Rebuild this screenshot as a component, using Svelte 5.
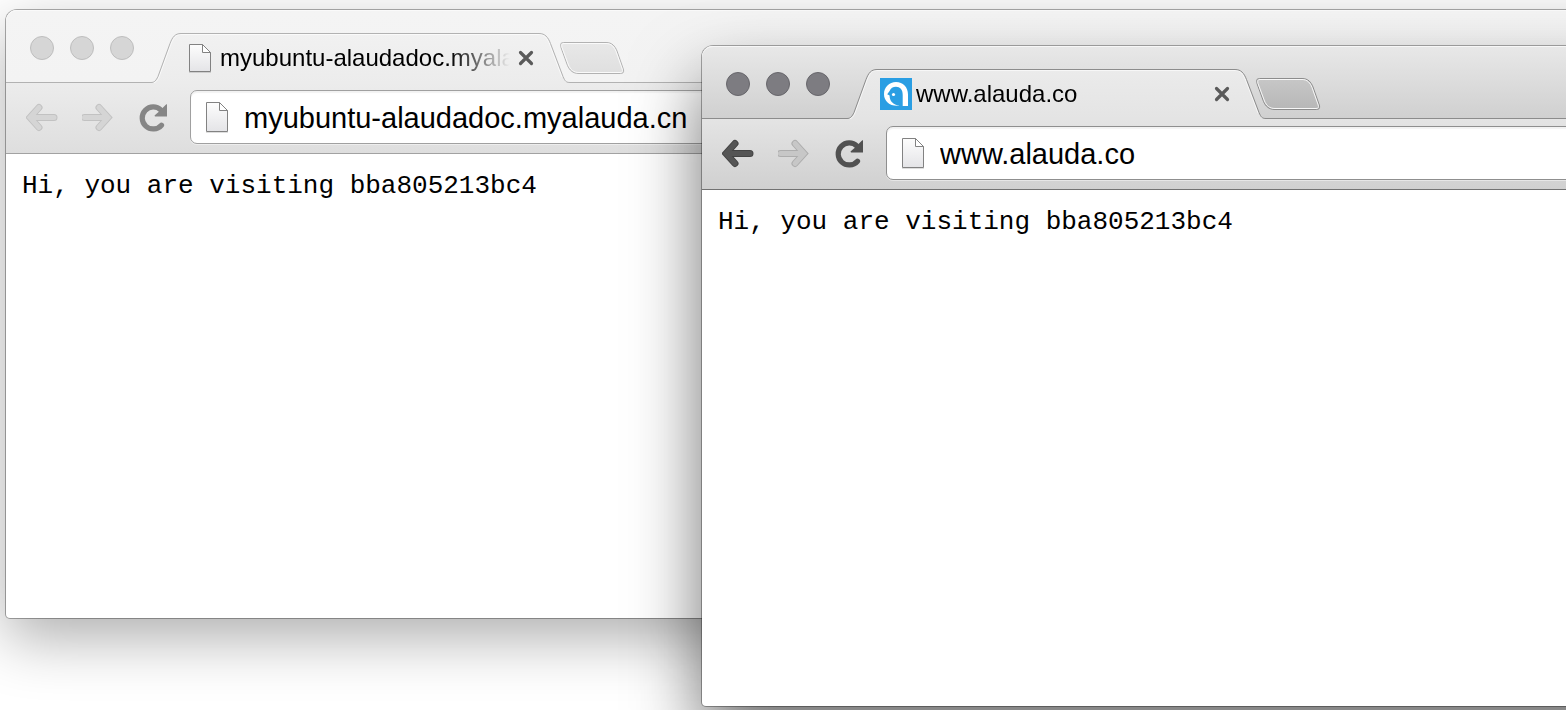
<script>
  const windows = [
    { id: 'back', title: 'myubuntu-alaudadoc.myalauda.cn', url: 'myubuntu-alaudadoc.myalauda.cn', active: false, logo: false },
    { id: 'front', title: 'www.alauda.co', url: 'www.alauda.co', active: true, logo: true }
  ];
  const message = 'Hi, you are visiting bba805213bc4';
</script>

{#snippet page(id, height)}
  <svg class="page" width="24" height={height + 2} viewBox="0 0 24 {height + 2}" aria-hidden="true">
    <defs>
      <linearGradient id="paper-{id}" x1="0" y1="0" x2="0" y2="1">
        <stop offset="0" stop-color="#fdfdfd" />
        <stop offset="1" stop-color="#e4e4e7" />
      </linearGradient>
    </defs>
    <path d="M1 {height + 1.5}H23" stroke="#000" stroke-opacity=".13" />
    <path d="M1.5 1.5H14.5L22.5 9.5V{height + 0.5}H1.5Z" fill="url(#paper-{id})" stroke="#828282" />
    <path d="M14.5 1.5V9.5H22.5Z" fill="#fff" stroke="#828282" />
  </svg>
{/snippet}

<main class="desktop">
  {#each windows as w (w.id)}
    <section class="window {w.id}" aria-label={w.title}>
      <header class="strip">
        <div class="lights">
          <button aria-label="Close window"></button>
          <button aria-label="Minimize window"></button>
          <button aria-label="Zoom window"></button>
        </div>
        <div class="tab">
          <svg class="shape" width="420" height="50" viewBox="0 0 420 50" aria-hidden="true">
            <defs>
              <linearGradient id="tab-{w.id}" x1="0" y1="0" x2="0" y2="1">
                <stop class="tab-top" offset="0" />
                <stop class="tab-bottom" offset="1" />
              </linearGradient>
            </defs>
            <path d="M0 50V49.500H1C4.500 49.500 6 47.500 8 43.500L20 10.500C22.500 4 25 .5 31 .5H389C395 .5 398 4 400.500 10.500L413 43.500C415 48 416 49.500 420 49.500V50Z" fill="url(#tab-{w.id})" />
            <path class="rim" d="M3 50C6 49.500 7.500 47.500 9 44L21 11C23.500 5 26 1.500 31 1.500H389C394.500 1.500 397 5 399.500 11L412 44" fill="none" />
            <path class="edge" d="M0 49.500H1C4.500 49.500 6 47.500 8 43.500L20 10.500C22.500 4 25 .5 31 .5H389C395 .5 398 4 400.500 10.500L413 43.500C415 48 416 49.500 420 49.500" fill="none" />
          </svg>
          <span class="favicon">
            {#if w.logo}
              <svg width="32" height="32" viewBox="0 0 32 32" aria-hidden="true">
                <path d="M0 0H32V32H0Z" fill="#2a9ee3" />
                <path d="M28 28H22.700V17C22.700 11.500 20 8.800 16 8.800C13 8.800 10.500 10.300 9.600 13L7.200 16.200L9.600 17.500C9.500 23 13 26.700 19.500 27.600C10.500 28.800 4 23.500 4 16.200C4 9 9.300 4 16 4C23 4 28 9 28 16.500Z" fill="#fff" />
                <circle cx="13.500" cy="16.500" r="1.600" fill="#fff" />
              </svg>
            {:else}
              {@render page(w.id + '-tab', 28)}
            {/if}
          </span>
          <span class="title">{w.title}</span>
          <button class="close" aria-label="Close tab">
            <svg width="24" height="24" viewBox="0 0 24 24" aria-hidden="true">
              <path d="M6.500 6.500L17.500 17.500M17.500 6.500L6.500 17.500" stroke="#5a5a5a" stroke-width="3.200" stroke-linecap="round" />
            </svg>
          </button>
        </div>
        <button class="new-tab" aria-label="New tab">
          <svg width="66" height="34" viewBox="0 0 66 34" aria-hidden="true">
            <defs>
              <linearGradient id="plus-{w.id}" x1="0" y1="0" x2="0" y2="1">
                <stop class="plus-top" offset="0" />
                <stop class="plus-bottom" offset="1" />
              </linearGradient>
            </defs>
            <path class="edge" fill="url(#plus-{w.id})" d="M4.500 1.500H47C53 1.500 56 5 58 10L64.300 28C65 31 64.500 32.500 61.500 32.500H20C13.500 32.500 10.500 29 8.500 24.500L2 6.500C1.200 3.500 1.500 1.500 4.500 1.500Z" />
            <path class="rim" fill="none" d="M5 2.500H47C52.500 2.500 55.200 6 57 10.500L63.200 28C63.800 30.200 63.500 31.500 61 31.500H20C14.500 31.500 11.500 28.500 9.500 24L3 6.500C2.400 4 2.700 2.500 5 2.500Z" />
          </svg>
        </button>
      </header>

      <nav class="toolbar" aria-label="Navigation">
        <button class="go" class:off={!w.active} aria-label="Back">
          <svg width="32" height="32" viewBox="0 0 32 32" aria-hidden="true">
            <path class="arrow-edge" d="M13 6.500L4 16.500L13 26.500M5 16.500H28" />
            <path class="arrow-fill" d="M13 6.500L4 16.500L13 26.500M5 16.500H28" />
          </svg>
        </button>
        <button class="go off" aria-label="Forward">
          <svg width="32" height="32" viewBox="0 0 32 32" aria-hidden="true">
            <path class="arrow-edge" d="M17 6.500L26 16.500L17 26.500M25 16.500H2.500" />
            <path class="arrow-fill" d="M17 6.500L26 16.500L17 26.500M25 16.500H2.500" />
          </svg>
        </button>
        <button class="reload" aria-label="Reload">
          <svg width="32" height="32" viewBox="0 0 32 32" aria-hidden="true">
            <path d="M23.500 24.200A11 11 0 1 1 23 9.200" fill="none" stroke="currentColor" stroke-width="5.200" stroke-linecap="round" />
            <path d="M29 3V15.500H17L16.500 14.500L20.500 11L27.500 4Z" fill="currentColor" />
          </svg>
        </button>
        <label class="omnibox">
          {@render page(w.id + '-url', 30)}
          <input type="text" aria-label="Address" value={w.url} spellcheck="false" />
        </label>
      </nav>

      <article class="content"><pre>{message}</pre></article>
    </section>
  {/each}
</main>

<style>
  :global(body) {
    margin: 0;
    background: #fff;
  }
  .desktop {
    position: relative;
    min-height: 100vh;
    overflow: hidden;
    font-family: "Liberation Sans", Arial, sans-serif;
    color: #000;
  }
  button {
    display: block;
    flex: none;
    margin: 0;
    padding: 0;
    border: 0;
    background: none;
  }
  svg {
    display: block;
    flex: none;
  }
  .window {
    position: absolute;
    right: -80px;
    display: flex;
    flex-direction: column;
    border-radius: 11px 11px 4px 4px;
    background: #fff;
  }
  .back {
    --edge: #b2b2b2;
    --rim: #fafafa;
    --line: #a2a2a2;
    --field: #a0a0a0;
    --strip-top: #f4f4f4;
    --strip-bottom: #f3f3f3;
    --tab-top: #f1f1f1;
    --bar-top: #ececec;
    --bar-bottom: #dedede;
    --plus-top: #e8e8e8;
    --plus-bottom: #dfdfdf;
    --light: #d6d6d6;
    --light-edge: #bebebe;
    --off: #d5d5d5;
    --off-edge: #c2c2c2;
    --reload: #868686;
    top: 10px;
    bottom: 92px;
    left: 6px;
    box-shadow: 0 0 0 1px #00000050, 0 20px 60px #00000052;
  }
  .front {
    --edge: #8c8c8c;
    --rim: #f7f7f7;
    --line: #727272;
    --field: #8f8f8f;
    --strip-top: #e8e8e8;
    --strip-bottom: #d0d0d0;
    --tab-top: #ebebeb;
    --bar-top: #e4e4e4;
    --bar-bottom: #d0d0d0;
    --plus-top: #c7c7c7;
    --plus-bottom: #b7b7b7;
    --light: #7d7c81;
    --light-edge: #67666b;
    --off: #c7c7c7;
    --off-edge: #adadad;
    --reload: #515151;
    top: 46px;
    bottom: 4px;
    left: 702px;
    box-shadow: 0 0 0 1px #00000050, 0 36px 70px #0000008f;
  }
  .strip {
    display: flex;
    align-items: flex-start;
    box-sizing: border-box;
    height: 73px;
    padding-left: 24px;
    border-bottom: 1px solid var(--edge);
    border-radius: 11px 11px 0 0;
    background: linear-gradient(var(--strip-top), var(--strip-bottom));
    box-shadow: inset 0 1px 0 var(--rim);
  }
  .lights {
    display: flex;
    gap: 16px;
    padding: 26px 16px 0 0;
  }
  .lights button {
    box-sizing: border-box;
    width: 24px;
    height: 24px;
    border: 1px solid var(--light-edge);
    border-radius: 50%;
    background: var(--light);
  }
  .tab {
    position: relative;
    display: flex;
    flex: none;
    align-items: center;
    gap: 4px;
    box-sizing: border-box;
    width: 420px;
    height: 50px;
    margin-top: 23px;
    padding: 0 32px 0 34px;
  }
  .shape {
    position: absolute;
    inset: 0;
  }
  .tab-top { stop-color: var(--tab-top); }
  .tab-bottom { stop-color: var(--bar-top); }
  .plus-top { stop-color: var(--plus-top); }
  .plus-bottom { stop-color: var(--plus-bottom); }
  .edge { stroke: var(--edge); }
  .rim { stroke: var(--rim); }
  .favicon {
    position: relative;
    display: flex;
    flex: none;
    justify-content: center;
    width: 32px;
  }
  .title {
    position: relative;
    flex: 1;
    min-width: 0;
    overflow: hidden;
    font-size: 24px;
    line-height: 32px;
    white-space: nowrap;
    mask-image: linear-gradient(to right, #000 calc(100% - 60px), transparent);
  }
  .close {
    position: relative;
  }
  .new-tab {
    margin: 31px 0 0 -11px;
  }
  .toolbar {
    display: flex;
    align-items: center;
    gap: 24px;
    padding: 7px 0 9px 20px;
    border-bottom: 1px solid var(--line);
    background: linear-gradient(var(--bar-top), var(--bar-bottom));
  }
  .go {
    --fill: #555;
    --outline: #444;
  }
  .off {
    --fill: var(--off);
    --outline: var(--off-edge);
  }
  .arrow-edge,
  .arrow-fill {
    fill: none;
    stroke: var(--outline);
    stroke-width: 7;
    stroke-linecap: round;
  }
  .arrow-fill {
    stroke: var(--fill);
    stroke-width: 5;
  }
  .reload {
    color: var(--reload);
  }
  .omnibox {
    display: flex;
    flex: 1;
    align-items: center;
    gap: 15px;
    box-sizing: border-box;
    height: 54px;
    margin-left: -4px;
    padding-left: 14px;
    border: 1px solid var(--field);
    border-radius: 7px;
    background: #fff;
    box-shadow: inset 0 2px 1px #0000000d, 0 1px 0 #ffffff70;
  }
  .omnibox input {
    flex: 1;
    min-width: 0;
    padding: 2px 0 0;
    border: 0;
    outline: 0;
    background: none;
    color: #000;
    font-family: inherit;
    font-size: 29px;
    line-height: 36px;
  }
  .content {
    flex: 1;
    padding: 16px;
  }
  pre {
    margin: 0;
    font-family: "Liberation Mono", "Courier New", monospace;
    font-size: 26px;
    line-height: 32px;
  }
</style>
